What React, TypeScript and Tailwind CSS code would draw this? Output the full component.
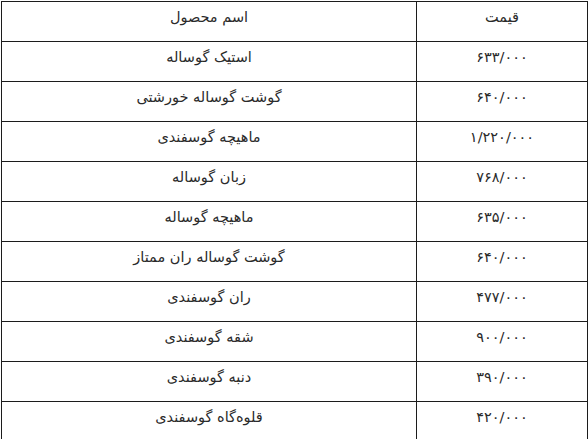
import React from 'react';

const rows: [string, string][] = [
  ['استیک گوساله', '۶۳۳/۰۰۰'],
  ['گوشت گوساله خورشتی', '۶۴۰/۰۰۰'],
  ['ماهیچه گوسفندی', '۱/۲۲۰/۰۰۰'],
  ['زبان گوساله', '۷۶۸/۰۰۰'],
  ['ماهیچه گوساله', '۶۳۵/۰۰۰'],
  ['گوشت گوساله ران ممتاز', '۶۴۰/۰۰۰'],
  ['ران گوسفندی', '۴۷۷/۰۰۰'],
  ['شقه گوسفندی', '۹۰۰/۰۰۰'],
  ['دنبه گوسفندی', '۳۹۰/۰۰۰'],
  ['قلوه‌گاه گوسفندی', '۴۲۰/۰۰۰'],
];

function Row({ name, price }: { name: string; price: string }) {
  return (
    <div className="flex h-[40px] border-b border-[#1c1c1c]">
      <div className="w-[171px] shrink-0 border-l border-[#1c1c1c] pt-[5px] text-center">{price}</div>
      <div className="flex-1 pt-[5px] text-center">{name}</div>
    </div>
  );
}

export default function App() {
  return (
    <div className="h-[439px] w-[588px] overflow-hidden bg-white pt-px">
      <div
        dir="rtl"
        className="ml-px w-[587px] border-x border-t border-[#1c1c1c] text-[14.5px] leading-[20px] text-[#2a2a2a]"
        style={{ fontFamily: '"DejaVu Sans", sans-serif' }}
      >
        <Row name="اسم محصول" price="قیمت" />
        {rows.map(([name, price]) => (
          <Row key={name} name={name} price={price} />
        ))}
      </div>
    </div>
  );
}
